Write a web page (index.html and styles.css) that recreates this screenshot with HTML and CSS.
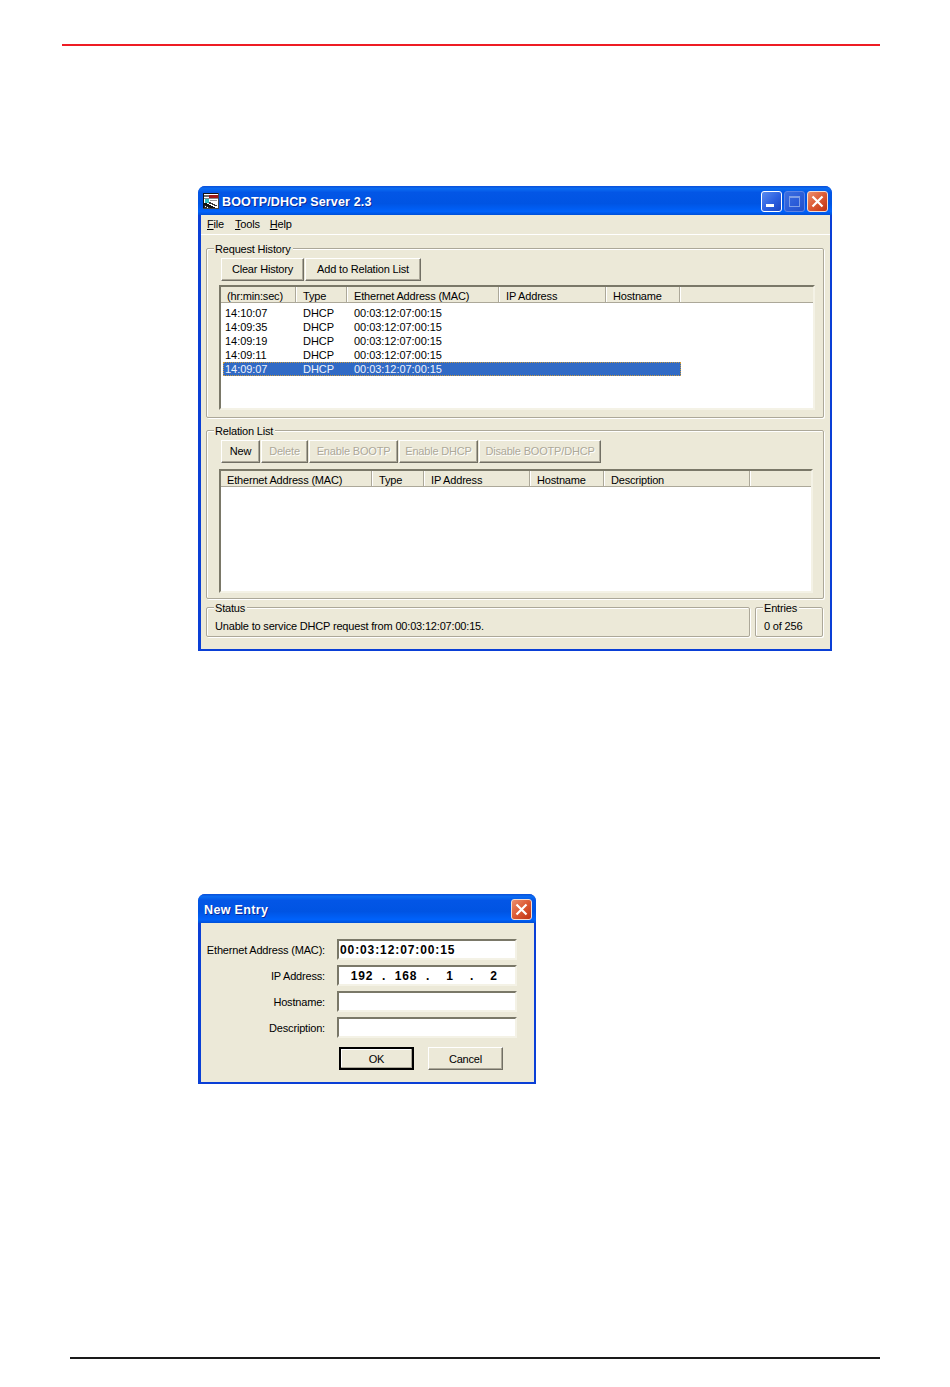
FILE: index.html
```html
<!DOCTYPE html>
<html lang="en">
<head>
<meta charset="utf-8">
<title>BOOTP/DHCP Server 2.3</title>
<link rel="stylesheet" href="styles.css">
</head>
<body>
<div class="page">
  <div class="rule rule-top"></div>

  <section class="win win-main">
    <header class="titlebar">
      <svg class="app-icon" width="16" height="16" viewBox="0 0 16 16" aria-hidden="true">
        <rect x="0" y="0" width="16" height="16" fill="#fff"/>
        <rect x="0" y="0" width="16" height="1" fill="#111"/>
        <rect x="0" y="0" width="1" height="16" fill="#111"/>
        <rect x="15" y="0" width="1" height="16" fill="#444"/>
        <rect x="0" y="15" width="16" height="1" fill="#444"/>
        <rect x="6" y="2" width="9" height="3" fill="#a01818"/>
        <rect x="1" y="2" width="5" height="2" fill="#6a6a6a"/>
        <rect x="1" y="5" width="14" height="1" fill="#8a8a8a"/>
        <rect x="2" y="6" width="4" height="4" fill="#38c0c0"/>
        <rect x="7" y="7" width="7" height="1" fill="#9a9a9a"/>
        <path d="M1 10h3v1h2v1h2v1h2v1h2v1H7v-1H5v-1H3v-1H1z" fill="#111"/>
        <path d="M1 12h2v1h2v1h2v1H1z" fill="#2a2a2a"/>
        <path d="M2 13h1v1h-1zM4 14h1v1h-1z" fill="#fff"/>
        <path d="M6 9h2v1h2v1h2v1h2v1h-3v-1H9v-1H6z" fill="#3a3a3a"/>
      </svg>
      <span class="title-text">BOOTP/DHCP Server 2.3</span>
      <div class="title-btns">
        <button class="tb tb-min" type="button" aria-label="Minimize">
          <svg width="19" height="19" viewBox="0 0 19 19"><rect x="4" y="12" width="8" height="3" fill="#fff"/></svg>
        </button>
        <button class="tb tb-max" type="button" aria-label="Maximize">
          <svg width="19" height="19" viewBox="0 0 19 19"><rect x="4.5" y="4.5" width="10" height="10" fill="none" stroke="#7f9fe6"/><rect x="4" y="4" width="11" height="2" fill="#7f9fe6"/></svg>
        </button>
        <button class="tb tb-close" type="button" aria-label="Close">
          <svg width="19" height="19" viewBox="0 0 19 19"><path d="M4.5 4.5l10 10M14.5 4.5l-10 10" stroke="#fff" stroke-width="2.2" fill="none"/></svg>
        </button>
      </div>
    </header>
    <div class="client">
      <nav class="menu">
        <span class="menu-item"><u>F</u>ile</span>
        <span class="menu-item"><u>T</u>ools</span>
        <span class="menu-item"><u>H</u>elp</span>
      </nav>
      <div class="panels">
        <div class="group group-history">
          <span class="legend">Request History</span>
          <div class="btn-row">
            <button class="btn btn-clear" type="button">Clear History</button>
            <button class="btn btn-add" type="button">Add to Relation List</button>
          </div>
          <div class="list list-history">
            <div class="list-head head-history">
              <span class="hc">(hr:min:sec)</span>
              <span class="hc">Type</span>
              <span class="hc">Ethernet Address (MAC)</span>
              <span class="hc">IP Address</span>
              <span class="hc">Hostname</span>
              <span class="hc"></span>
            </div>
            <div class="list-body">
              <div class="row"><span>14:10:07</span><span>DHCP</span><span>00:03:12:07:00:15</span></div>
              <div class="row"><span>14:09:35</span><span>DHCP</span><span>00:03:12:07:00:15</span></div>
              <div class="row"><span>14:09:19</span><span>DHCP</span><span>00:03:12:07:00:15</span></div>
              <div class="row"><span>14:09:11</span><span>DHCP</span><span>00:03:12:07:00:15</span></div>
              <div class="row row-selected"><span>14:09:07</span><span>DHCP</span><span>00:03:12:07:00:15</span></div>
            </div>
          </div>
        </div>

        <div class="group group-relation">
          <span class="legend">Relation List</span>
          <div class="btn-row">
            <button class="btn btn-new" type="button">New</button>
            <button class="btn btn-del" type="button" disabled>Delete</button>
            <button class="btn btn-boot" type="button" disabled>Enable BOOTP</button>
            <button class="btn btn-dhcp" type="button" disabled>Enable DHCP</button>
            <button class="btn btn-dis" type="button" disabled>Disable BOOTP/DHCP</button>
          </div>
          <div class="list list-relation">
            <div class="list-head head-relation">
              <span class="hc">Ethernet Address (MAC)</span>
              <span class="hc">Type</span>
              <span class="hc">IP Address</span>
              <span class="hc">Hostname</span>
              <span class="hc">Description</span>
              <span class="hc"></span>
            </div>
          </div>
        </div>

        <div class="status-row">
          <div class="group group-status">
            <span class="legend">Status</span>
            <p class="status-text">Unable to service DHCP request from 00:03:12:07:00:15.</p>
          </div>
          <div class="group group-entries">
            <span class="legend">Entries</span>
            <p class="status-text">0 of 256</p>
          </div>
        </div>
      </div>
    </div>
  </section>

  <section class="win win-dialog">
    <header class="titlebar">
      <span class="title-text title-dialog">New Entry</span>
      <div class="title-btns">
        <button class="tb tb-close" type="button" aria-label="Close">
          <svg width="19" height="19" viewBox="0 0 19 19"><path d="M4.5 4.5l10 10M14.5 4.5l-10 10" stroke="#fff" stroke-width="2.2" fill="none"/></svg>
        </button>
      </div>
    </header>
    <div class="client dialog-client">
      <div class="form">
        <label class="form-label">Ethernet Address (MAC):</label>
        <div class="field">00:03:12:07:00:15</div>
        <label class="form-label">IP Address:</label>
        <div class="field field-ip">
          <span class="oct">192</span><span class="dot">.</span>
          <span class="oct">168</span><span class="dot">.</span>
          <span class="oct">1</span><span class="dot">.</span>
          <span class="oct">2</span>
        </div>
        <label class="form-label">Hostname:</label>
        <div class="field"></div>
        <label class="form-label">Description:</label>
        <div class="field"></div>
      </div>
      <div class="dialog-btns">
        <button class="btn btn-dlg btn-default" type="button">OK</button>
        <button class="btn btn-dlg btn-flat" type="button">Cancel</button>
      </div>
    </div>
  </section>

  <div class="rule rule-bottom"></div>
</div>
</body>
</html>
```

FILE: styles.css
```css
* { box-sizing: border-box; }
html, body { margin: 0; padding: 0; background: #fff; }
body { font-family: "Liberation Sans", Arial, sans-serif; font-size: 11px; letter-spacing: -0.18px; color: #000; }
p { margin: 0; }

.page { width: 950px; height: 1387px; padding-top: 44px; overflow: hidden; }

.rule { height: 2px; }
.rule-top { width: 818px; margin-left: 62px; background: #ee1c24; }
.rule-bottom { width: 810px; margin-left: 70px; margin-top: 273px; background: #1a1a1a; }

/* Windows */
.win {
  margin-left: 198px;
  border-radius: 7px 7px 0 0;
  background: #0a3fd6;
  padding: 0 2px 2px 3px;
  overflow: hidden;
}
.win-main { width: 634px; margin-top: 140px; }
.win-dialog { width: 338px; margin-top: 243px; }

.titlebar {
  display: flex;
  align-items: center;
  height: 29px;
  margin: 0 -2px 0 -3px;
  padding: 0 4px 0 5px;
  background: linear-gradient(180deg, #0a4fd8 0, #0b6cf2 9%, #0356e6 22%, #0054e3 60%, #0062fb 88%, #0050d8 100%);
}
.app-icon { flex: none; margin-right: 3px; }
.title-text {
  margin-top: 2px;
  color: #fff;
  font-family: "Liberation Sans", sans-serif;
  font-weight: 700;
  font-size: 12.5px;
  letter-spacing: 0.15px;
  text-shadow: 1px 1px 0 #0a2a9a;
}
.title-dialog { margin: 2px 0 0 1px; letter-spacing: 0.35px; }
.title-btns { margin-left: auto; display: flex; gap: 2px; margin-top: 1px; }
.tb {
  width: 21px;
  height: 21px;
  padding: 0;
  border: 1px solid #fff;
  border-radius: 3px;
  display: flex;
  align-items: center;
  justify-content: center;
  background: linear-gradient(135deg, #5a8cf0 0, #2c5fe0 55%, #1c45c0 100%);
}
.tb-max {
  border-color: #5d84e4;
  background: linear-gradient(135deg, #3c6fe0 0, #2a5bd8 60%, #2450c8 100%);
}
.tb-close {
  border-color: #f3ddd3;
  background: linear-gradient(135deg, #ec8f6e 0, #dc5a34 50%, #bf3212 100%);
}

.client { background: #ece9d8; padding-bottom: 12px; }

.menu {
  display: flex;
  gap: 10px;
  height: 20px;
  padding: 0 0 0 6px;
  align-items: center;
  border-bottom: 1px solid #fff;
}
.menu-item { line-height: 13px; }
.menu-item:first-child { margin-right: 1px; }

.panels { padding: 13px 6px 0 5px; }

/* Group boxes */
.group {
  position: relative;
  border: 1px solid #aca899;
  box-shadow: 1px 1px 0 #fff, inset 1px 1px 0 #fff;
  border-radius: 2px;
}
.legend {
  position: absolute;
  top: -6px;
  left: 7px;
  padding: 0 2px 0 1px;
  line-height: 13px;
  background: #ece9d8;
}
.group-history { height: 170px; padding: 9px 8px 0 12px; }
.group-relation { height: 169px; margin-top: 12px; padding: 9px 10px 0 12px; }

.btn-row { display: flex; gap: 1px; padding-left: 2px; }
.btn {
  height: 23px;
  padding: 0 0 2px;
  font: inherit;
  letter-spacing: inherit;
  color: #000;
  background: #ece9d8;
  border: 1px solid;
  border-color: #fff #716f64 #716f64 #fff;
  box-shadow: inset -1px -1px 0 #aca899;
}
.btn:disabled { color: #aca899; text-shadow: 1px 1px 0 #fff; }
.btn-clear { width: 83px; }
.btn-add { width: 116px; }
.btn-new { width: 39px; }
.btn-del { width: 47px; }
.btn-boot { width: 89px; }
.btn-dhcp { width: 79px; }
.btn-dis { width: 122px; }

/* List views */
.list {
  background: #fff;
  border: 2px solid;
  border-color: #7a7868 #f4f2e6 #f4f2e6 #7a7868;
}
.list-history { height: 125px; margin-top: 4px; }
.list-relation { height: 124px; margin-top: 6px; }

.list-head {
  display: grid;
  grid-template-rows: 15px;
  height: 16px;
  background: #ece9d8;
  border-bottom: 1px solid #aca899;
}
.head-history { grid-template-columns: 75px 51px 152px 107px 74px 1fr; }
.head-relation { grid-template-columns: 151px 52px 106px 74px 146px 1fr; }
.hc {
  padding: 2px 0 0 7px;
  line-height: 14px;
  border-right: 1px solid #aca899;
  box-shadow: 1px 0 0 #fff;
}
.hc:first-child { padding-left: 6px; }
.hc:last-child { border-right: 0; box-shadow: none; }

.list-body { padding: 3px 0 0 2px; }
.row {
  display: grid;
  grid-template-columns: 78px 51px 1fr;
  width: 458px;
  height: 14px;
  line-height: 14px;
  padding-left: 2px;
  letter-spacing: -0.05px;
}
.row-selected {
  background: #316ac5;
  color: #eef2fb;
  outline: 1px dotted #c89a40;
  outline-offset: -1px;
}

.status-row { display: flex; gap: 5px; margin-top: 8px; padding-right: 1px; }
.group-status { flex: 1; height: 30px; padding: 11px 0 0 8px; }
.group-entries { width: 68px; height: 30px; padding: 11px 0 0 8px; }
.status-text { line-height: 14px; }

/* Dialog */
.form {
  display: grid;
  grid-template-columns: 124px 180px;
  grid-auto-rows: 21px;
  column-gap: 12px;
  row-gap: 5px;
  padding-top: 16px;
}
.form-label { text-align: right; line-height: 23px; }
.field {
  height: 21px;
  background: #fff;
  border: 2px solid;
  border-color: #7a7868 #f4f2e6 #f4f2e6 #7a7868;
  font-weight: 700;
  font-size: 12px;
  letter-spacing: 0.9px;
  line-height: 19px;
  padding-left: 1px;
}
.field-ip { display: flex; padding-left: 11px; }
.oct { width: 24px; text-align: center; }
.dot { width: 20px; text-align: center; }

.dialog-btns { display: flex; gap: 14px; margin: 9px 0 0 138px; }
.btn-dlg { width: 75px; padding-bottom: 0; }
.btn-default { border: 2px solid #000; box-shadow: inset -1px -1px 0 #aca899, inset 1px 1px 0 #fff; }
```
